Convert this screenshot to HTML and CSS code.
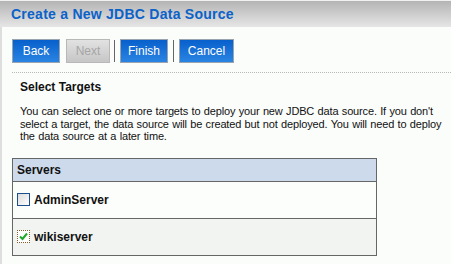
FILE: index.html
```html
<!DOCTYPE html>
<html lang="en">
<head>
  <meta charset="UTF-8">
  <title>Create a New JDBC Data Source</title>
  <link rel="stylesheet" href="styles.css">
</head>
<body>
  <div class="header">
    <h1>Create a New JDBC Data Source</h1>
  </div>

  <div class="content">
    <div class="toolbar">
      <button class="btn back">Back</button>
      <button class="btn next disabled">Next</button>
      <span class="sep"></span>
      <button class="btn finish">Finish</button>
      <span class="sep"></span>
      <button class="btn cancel">Cancel</button>
    </div>

    <div class="section">
      <h2>Select Targets</h2>
      <p>You can select one or more targets to deploy your new JDBC data source. If you don't select a target, the data source will be created but not deployed. You will need to deploy the data source at a later time.</p>
    </div>

    <table class="servers">
      <tr class="head"><th>Servers</th></tr>
      <tr class="row">
        <td><span class="check"></span>AdminServer</td>
      </tr>
      <tr class="row alt">
        <td>
          <span class="check checked">
            <svg width="11" height="11" viewBox="0 0 11 11"><path d="M2 5.5 L4.5 8 L9 2.5" fill="none" stroke="#1fa82a" stroke-width="2"/></svg>
          </span>wikiserver
        </td>
      </tr>
    </table>
  </div>
</body>
</html>
```

FILE: styles.css
```css
* {
  font-family: "Liberation Sans", Arial, sans-serif;
  box-sizing: border-box;
}

body {
  margin: 0;
  background: #fbfdfb;
}

.header {
  height: 27px;
  border-top: 1px solid #f0f0f0;
  background: linear-gradient(#b4b4b4, #e6e6e6);
}

.header h1 {
  margin: 0;
  padding: 5px 0 0 11px;
  font-size: 14px;
  letter-spacing: 0.25px;
  color: #0b62c8;
}

.content {
  border-left: 2px solid #dedede;
  min-height: 237px;
  padding: 12px 0 0 10px;
}

.toolbar {
  display: flex;
  align-items: center;
  height: 24px;
}

.btn {
  height: 24px;
  padding: 0;
  margin-right: 6px;
  border: 1px solid #9aa4ae;
  background: linear-gradient(#0860cc, #2a84e2);
  color: #fff;
  font-size: 12px;
}

.btn.back { width: 48px; }
.btn.next { width: 44px; margin-right: 4px; }
.btn.finish { width: 48px; margin-right: 5px; }
.btn.cancel { width: 55px; }

.btn.disabled {
  background: linear-gradient(#e2e2e2, #c6c6c6);
  color: #a6a6a6;
  border-color: #b8b8b8;
}

.sep {
  width: 1px;
  height: 22px;
  background: #666;
  margin-right: 5px;
}

.section {
  margin-top: 9px;
  border-top: 1px dotted #b8b8b8;
  padding: 7px 0 0 8px;
}

.section h2 {
  margin: 0;
  font-size: 12px;
  color: #111;
}

.section p {
  margin: 11px 0 0 0;
  font-size: 11px;
  letter-spacing: -0.15px;
  word-spacing: 0.5px;
  line-height: 12.6px;
  color: #111;
  width: 431px;
}

.servers {
  margin-top: 15px;
  width: 365px;
  border-collapse: collapse;
  border: 1px solid #666;
}

.servers th {
  background: #cddaeb;
  text-align: left;
  font-size: 12px;
  height: 23px;
  padding: 0 4px;
  color: #111;
}

.servers td {
  height: 37px;
  padding: 0 4px;
  font-size: 12px;
  font-weight: bold;
  color: #111;
  border-top: 1px solid #666;
  background: #fcfefc;
}

.servers .alt td {
  background: #f2f4f2;
}

.check {
  display: inline-block;
  width: 13px;
  height: 13px;
  border: 1px solid #1c4f8c;
  background: linear-gradient(135deg, #dcdcdc, #fff);
  vertical-align: -2px;
  margin-right: 4px;
}

.check.checked {
  border: 1px dotted #8a5a2a;
  background: #fff;
}

.check svg {
  display: block;
}
```
